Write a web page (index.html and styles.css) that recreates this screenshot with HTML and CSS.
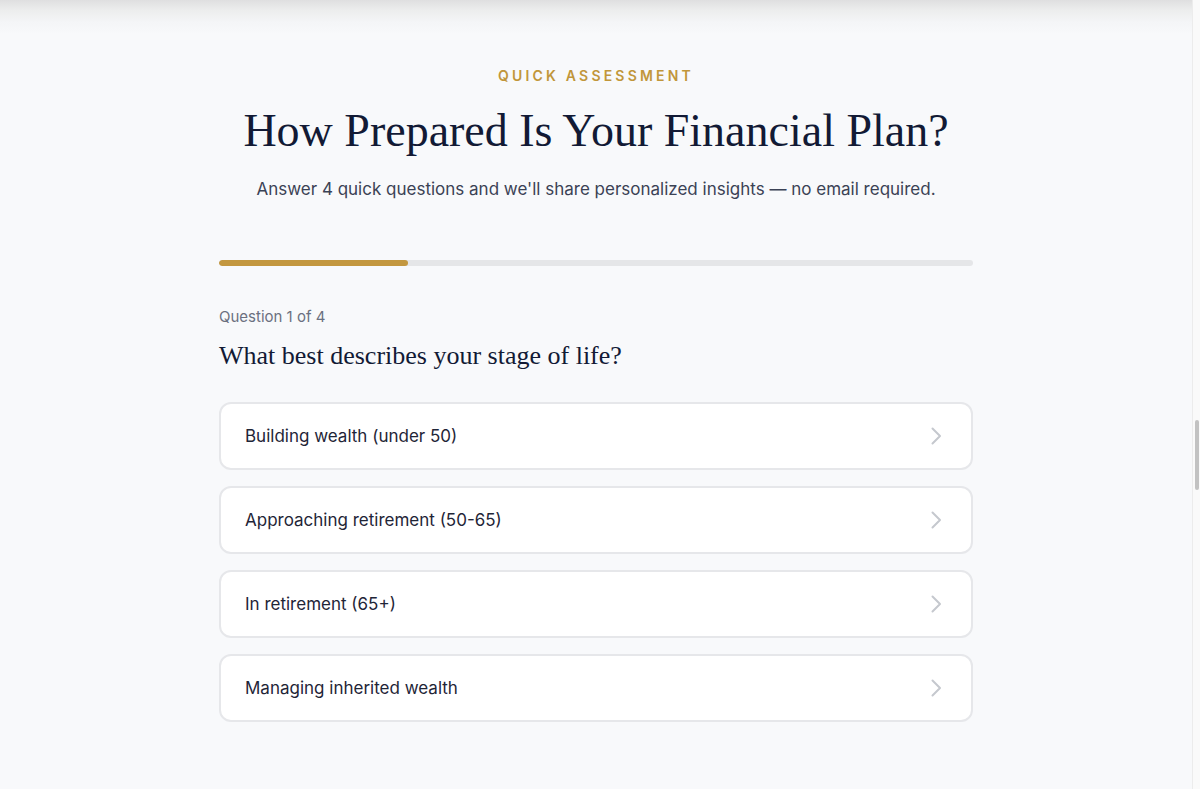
FILE: index.html
```html
<!DOCTYPE html>
<html lang="en">
<head>
    <meta charset="UTF-8">
    <meta name="viewport" content="width=device-width, initial-scale=1.0">
    <title>Quick Assessment</title>
    <link rel="stylesheet" href="styles.css">
</head>
<body>
    <main class="page">
        <section class="assessment">
            <div class="eyebrow">Quick Assessment</div>
            <h1>How Prepared Is Your Financial Plan?</h1>
            <p class="intro">Answer 4 quick questions and we'll share personalized insights — no email required.</p>

            <div class="progress">
                <div class="progress-fill" style="width: 25%"></div>
            </div>

            <div class="step">Question 1 of 4</div>
            <h2>What best describes your stage of life?</h2>

            <div class="options">
                <button class="option">
                    <span>Building wealth (under 50)</span>
                    <svg viewBox="0 0 24 24" width="24" height="24"><polyline points="8.5 4.5 16 12 8.5 19.5"/></svg>
                </button>
                <button class="option">
                    <span>Approaching retirement (50-65)</span>
                    <svg viewBox="0 0 24 24" width="24" height="24"><polyline points="8.5 4.5 16 12 8.5 19.5"/></svg>
                </button>
                <button class="option">
                    <span>In retirement (65+)</span>
                    <svg viewBox="0 0 24 24" width="24" height="24"><polyline points="8.5 4.5 16 12 8.5 19.5"/></svg>
                </button>
                <button class="option">
                    <span>Managing inherited wealth</span>
                    <svg viewBox="0 0 24 24" width="24" height="24"><polyline points="8.5 4.5 16 12 8.5 19.5"/></svg>
                </button>
            </div>
        </section>
    </main>

    <!-- fake scrollbar track -->
    <div class="scrollbar">
        <div class="scrollbar-thumb"></div>
    </div>
</body>
</html>
```

FILE: styles.css
```css
* {
    margin: 0;
    padding: 0;
    box-sizing: border-box;
}

body {
    height: 789px;
    display: flex;
    overflow: hidden;
    background: #f8f9fb;
    font-family: Inter, 'Noto Sans', sans-serif;
    color: #111a33;
}

.page {
    flex: 1;
    display: flex;
    justify-content: center;
    background: linear-gradient(to bottom, #dfdfe0 0, #eceded 10px, #f4f5f7 22px, #f8f9fb 34px);
}

.assessment {
    width: 754px;
    padding-top: 67px;
    text-align: center;
}

.eyebrow {
    font-size: 14px;
    font-weight: 600;
    letter-spacing: 3.2px;
    text-transform: uppercase;
    color: #c1963a;
    line-height: 17px;
}

h1 {
    font-family: 'Liberation Serif', 'Times New Roman', serif;
    font-weight: 400;
    font-size: 46px;
    line-height: 52px;
    margin-top: 21px;
    color: #121a35;
}

.intro {
    font-size: 17px;
    line-height: 26px;
    color: #3b4255;
    margin-top: 19px;
}

.progress {
    height: 6px;
    margin-top: 58px;
    border-radius: 3px;
    background: #e5e6e8;
    overflow: hidden;
}

.progress-fill {
    height: 100%;
    border-radius: 3px;
    background: #c3973f;
}

.step {
    text-align: left;
    margin-top: 41px;
    font-size: 15px;
    line-height: 20px;
    color: #6b7080;
}

h2 {
    text-align: left;
    font-family: 'Liberation Serif', 'Times New Roman', serif;
    font-weight: 400;
    font-size: 26px;
    line-height: 32px;
    margin-top: 13px;
    color: #121a35;
}

.options {
    display: flex;
    flex-direction: column;
    gap: 16px;
    margin-top: 30px;
}

.option {
    height: 68px;
    display: flex;
    align-items: center;
    justify-content: space-between;
    padding: 0 23px 0 24px;
    background: #fff;
    border: 2px solid #e6e7ea;
    border-radius: 12px;
    font-family: inherit;
    font-size: 17px;
    color: #1f2537;
    text-align: left;
    cursor: pointer;
}

.option svg {
    fill: none;
    stroke: #c5c8ce;
    stroke-width: 2;
    stroke-linecap: round;
    stroke-linejoin: round;
}

.scrollbar {
    width: 8px;
    background: #fafafa;
    border-left: 1px solid #ececec;
    padding-top: 420px;
}

.scrollbar-thumb {
    width: 4px;
    height: 70px;
    margin-left: 2px;
    border-radius: 2px;
    background: #c2c2c2;
}
```
